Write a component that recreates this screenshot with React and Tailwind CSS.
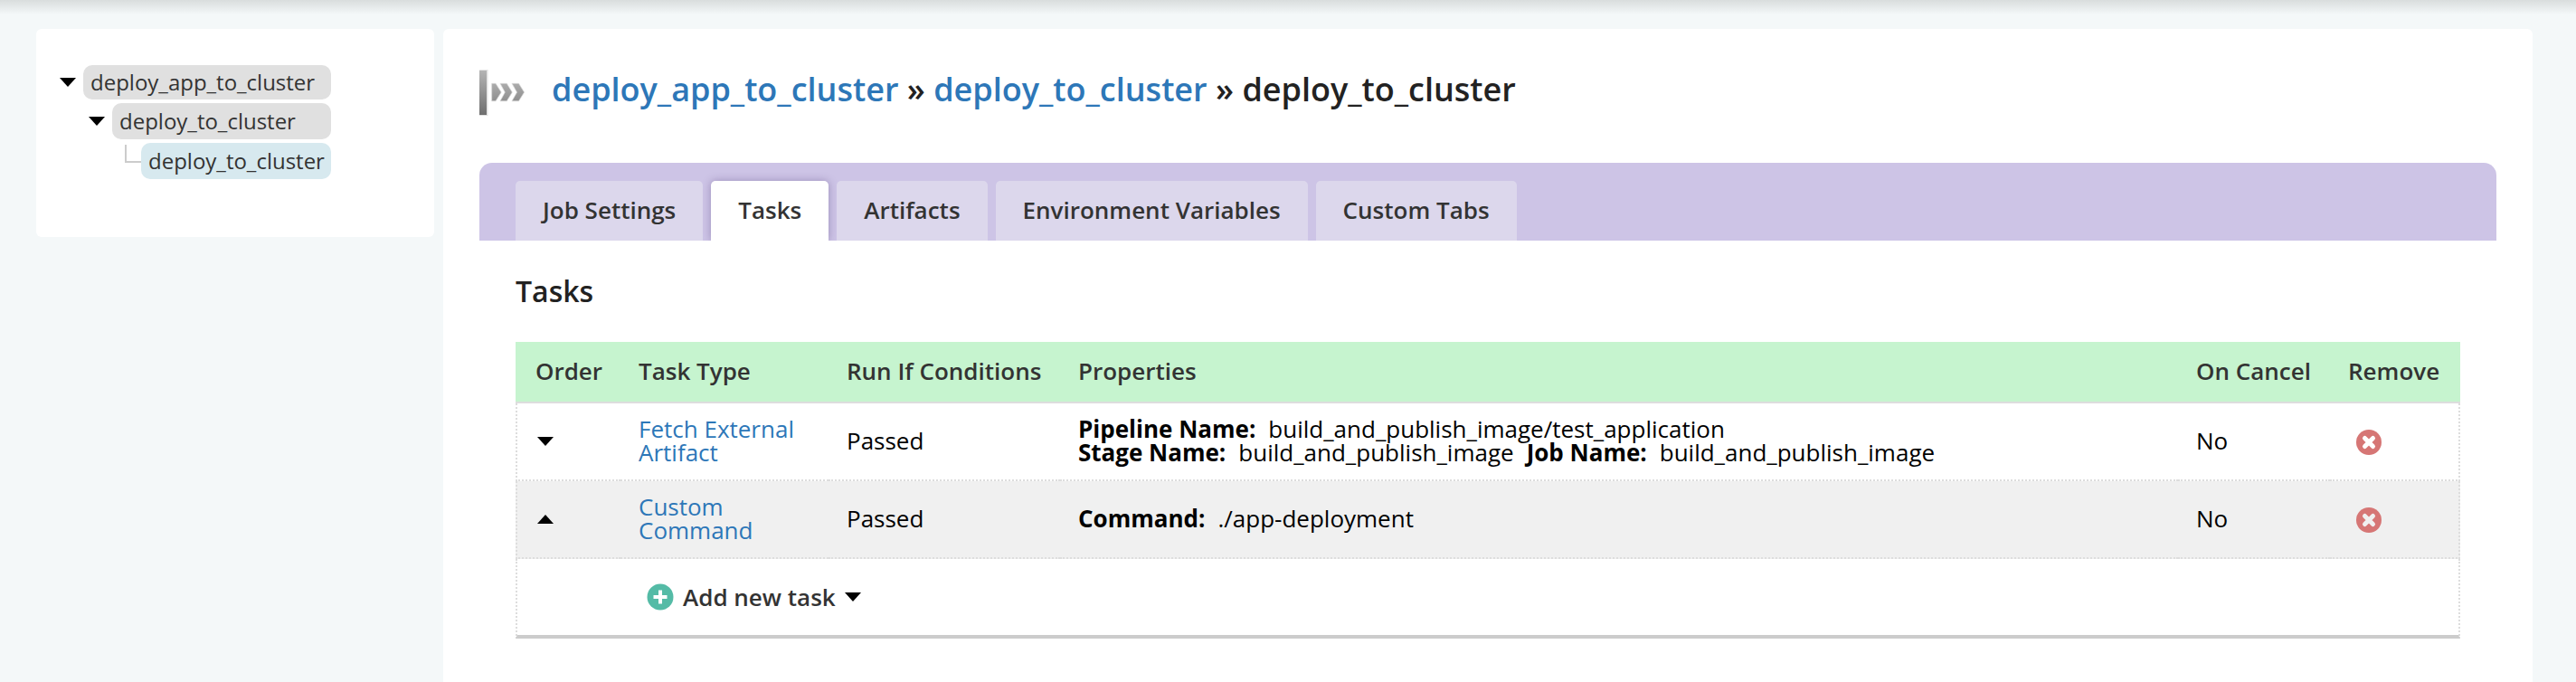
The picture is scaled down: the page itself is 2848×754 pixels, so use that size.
import React from "react";

const tabs = ["Job Settings", "Tasks", "Artifacts", "Environment Variables", "Custom Tabs"];

const columns = [
  { label: "Order", className: "w-[116px] pl-[22px]" },
  { label: "Task Type", className: "w-[230px] pl-[20px]" },
  { label: "Run If Conditions", className: "w-[256px] pl-[20px]" },
  { label: "Properties", className: "pl-[20px]" },
  { label: "On Cancel", className: "w-[168px] pl-[20px]" },
  { label: "Remove", className: "w-[144px] pl-[20px]" },
];

const textCell = "border-b-2 border-dotted border-[#ddd] px-[20px] pb-[3px]";

const tasks = [
  {
    type: "Fetch External Artifact",
    direction: "down",
    condition: "Passed",
    cancel: "No",
    properties: [
      [["Pipeline Name", "build_and_publish_image/test_application"]],
      [
        ["Stage Name", "build_and_publish_image"],
        ["Job Name", "build_and_publish_image"],
      ],
    ],
  },
  {
    type: "Custom Command",
    direction: "up",
    condition: "Passed",
    cancel: "No",
    properties: [[["Command", "./app-deployment"]]],
  },
];

function Caret({ direction = "down" }) {
  return (
    <svg viewBox="0 0 18 10" className="h-[10px] w-[18px] shrink-0" aria-hidden="true">
      <path d={direction === "up" ? "M0 10 9 0l9 10z" : "M0 0h18L9 10z"} />
    </svg>
  );
}

function JobIcon() {
  return (
    <svg viewBox="0 0 52 52" className="h-[52px] w-[52px] shrink-0" aria-hidden="true">
      <defs>
        <linearGradient id="bar" x1="0" y1="0" x2="0" y2="1">
          <stop offset="0" stopColor="#b4b4b4" />
          <stop offset="1" stopColor="#6f6f6f" />
        </linearGradient>
        <linearGradient id="arrows" x1="0" y1="0" x2="0" y2="1">
          <stop offset="0" stopColor="#acacac" />
          <stop offset="1" stopColor="#8f8f8f" />
        </linearGradient>
      </defs>
      <rect x="0" y="1" width="9.5" height="51" fill="#e2e2e2" />
      <rect x="0" y="2" width="8" height="49" fill="url(#bar)" />
      <g fill="url(#arrows)" stroke="#d8d8d8" strokeWidth="0.7">
        <path d="M13.700 16.300h4.300l6.200 9.700-6.200 9.700h-4.300z" />
        <path d="M23 16.300h7.300l6 9.700-6 9.700H23l5.300-9.700z" />
        <path d="M36 16.300h7.500l6.100 9.700-6.100 9.700H36l5.500-9.700z" />
      </g>
    </svg>
  );
}

function TreeLabel({ className, children }) {
  return (
    <a href="#" className={`block flex-1 rounded-[10px] pr-[4px] pl-[8px] ${className}`}>
      {children}
    </a>
  );
}

export default function App() {
  return (
    <div className="flex min-h-screen flex-col bg-[#f4f8f9] font-['Open_Sans',sans-serif] text-[#333]">
      <div className="h-[16px] bg-linear-to-b from-[#d9dddd] to-[#f4f8f9]" />
      <div className="flex flex-1 items-start gap-[10px] pt-[16px] pr-[48px] pl-[40px]">
        <nav className="w-[440px] shrink-0 rounded-[6px] bg-white px-[26px] pt-[40px] pb-[64px] text-[24px]">
          <div className="flex w-[300px] flex-col gap-[4px]">
            <div className="flex items-center gap-[8px]">
              <button type="button" aria-label="Collapse pipeline"><Caret /></button>
              <TreeLabel className="bg-[#e0e0e0] leading-[38px]">deploy_app_to_cluster</TreeLabel>
            </div>
            <div className="flex items-center gap-[8px] pl-[32px]">
              <button type="button" aria-label="Collapse stage"><Caret /></button>
              <TreeLabel className="bg-[#e0e0e0] leading-[40px]">deploy_to_cluster</TreeLabel>
            </div>
            <div className="flex items-start pl-[72px]">
              <span className="mt-[2px] h-[20px] w-[18px] shrink-0 border-b-2 border-l-2 border-[#ccc]" />
              <TreeLabel className="bg-[#d7e9ef] leading-[40px]">deploy_to_cluster</TreeLabel>
            </div>
          </div>
        </nav>

        <main className="flex-1 self-stretch rounded-t-[6px] bg-white px-[40px] pt-[44px]">
          <header className="flex items-start gap-[28px]">
            <JobIcon />
            <h1 className="text-[36px] leading-[46px] font-semibold text-[#222]">
              <a href="#" className="text-[#2d77b8]">deploy_app_to_cluster</a>
              {" » "}
              <a href="#" className="text-[#2d77b8]">deploy_to_cluster</a>
              {" » "}
              deploy_to_cluster
            </h1>
          </header>

          <div role="tablist" className="mt-[52px] flex gap-[9px] overflow-hidden rounded-t-[14px] bg-[#cdc4e6] px-[40px] pt-[20px]">
            {tabs.map((tab) => (
              <button
                key={tab}
                type="button"
                role="tab"
                aria-selected={tab === "Tasks"}
                className={
                  tab === "Tasks"
                    ? "h-[66px] rounded-t-[5px] bg-white px-[30px] pb-[2px] text-[26px] font-semibold shadow-[0_0_10px_rgba(80,60,120,0.4)]"
                    : "h-[66px] rounded-t-[5px] bg-[#dcd7ec] px-[30px] pb-[2px] text-[26px] font-semibold"
                }
              >
                {tab}
              </button>
            ))}
          </div>

          <section className="px-[40px] pt-[34px]">
            <h2 className="text-[32px] leading-[44px] font-semibold text-[#222]">Tasks</h2>
            <table className="mt-[34px] w-full table-fixed border-separate border-spacing-0 text-left text-[26px] leading-[26px] text-black">
              <thead>
                <tr className="h-[68px] bg-[#c6f4cf] text-[#333]">
                  {columns.map((c) => (
                    <th key={c.label} className={`${c.className} border-b-2 border-[#ddd] pb-[2px] font-semibold whitespace-nowrap`}>
                      {c.label}
                    </th>
                  ))}
                </tr>
              </thead>
              <tbody>
                {tasks.map((t) => (
                  <tr key={t.type} className="h-[86px] even:bg-[#f0f0f0]">
                    <td className="border-b-2 border-l-2 border-dotted border-[#ddd] pl-[22px]">
                      <button type="button" aria-label={`Move ${t.type} ${t.direction}`} className="flex">
                        <Caret direction={t.direction} />
                      </button>
                    </td>
                    <td className={textCell}>
                      <a href="#" className="text-[#2d77b8]">{t.type}</a>
                    </td>
                    <td className={textCell}>{t.condition}</td>
                    <td className={textCell}>
                      {t.properties.map((line, i) => (
                        <div key={i} className="flex gap-[14px]">
                          {line.map(([name, value]) => (
                            <span key={name} className="flex gap-[14px]">
                              <strong className="font-bold">{name}:</strong>
                              <span>{value}</span>
                            </span>
                          ))}
                        </div>
                      ))}
                    </td>
                    <td className={textCell}>{t.cancel}</td>
                    <td className="border-r-2 border-b-2 border-dotted border-[#ddd] pt-[2px] pl-[29px]">
                      <button type="button" aria-label={`Remove ${t.type}`} className="flex">
                        <svg viewBox="0 0 28 28" className="h-[28px] w-[28px]" aria-hidden="true">
                          <circle cx="14" cy="14" r="14" fill="#d67675" />
                          <path d="M9.500 9.500l9 9M18.500 9.500l-9 9" className={t.direction === "up" ? "stroke-[#f0f0f0]" : "stroke-white"} strokeWidth="5" strokeLinecap="round" />
                        </svg>
                      </button>
                    </td>
                  </tr>
                ))}
                <tr className="h-[88px]">
                  <td className="border-b-4 border-l-2 border-[#ccc] [border-left-color:#ddd] [border-left-style:dotted]" />
                  <td colSpan={5} className="border-r-2 border-b-4 border-[#ccc] pl-[29px] [border-right-color:#ddd] [border-right-style:dotted]">
                    <button type="button" className="flex items-center gap-[10px] font-semibold text-[#333]">
                      <svg viewBox="0 0 30 30" className="h-[30px] w-[30px]" aria-hidden="true">
                        <circle cx="15" cy="15" r="14.500" fill="#54bba6" />
                        <path d="M15 7.500v15M7.500 15h15" stroke="#fff" strokeWidth="4" />
                      </svg>
                      <span>Add new task</span>
                      <Caret />
                    </button>
                  </td>
                </tr>
              </tbody>
            </table>
          </section>
        </main>
      </div>
    </div>
  );
}
